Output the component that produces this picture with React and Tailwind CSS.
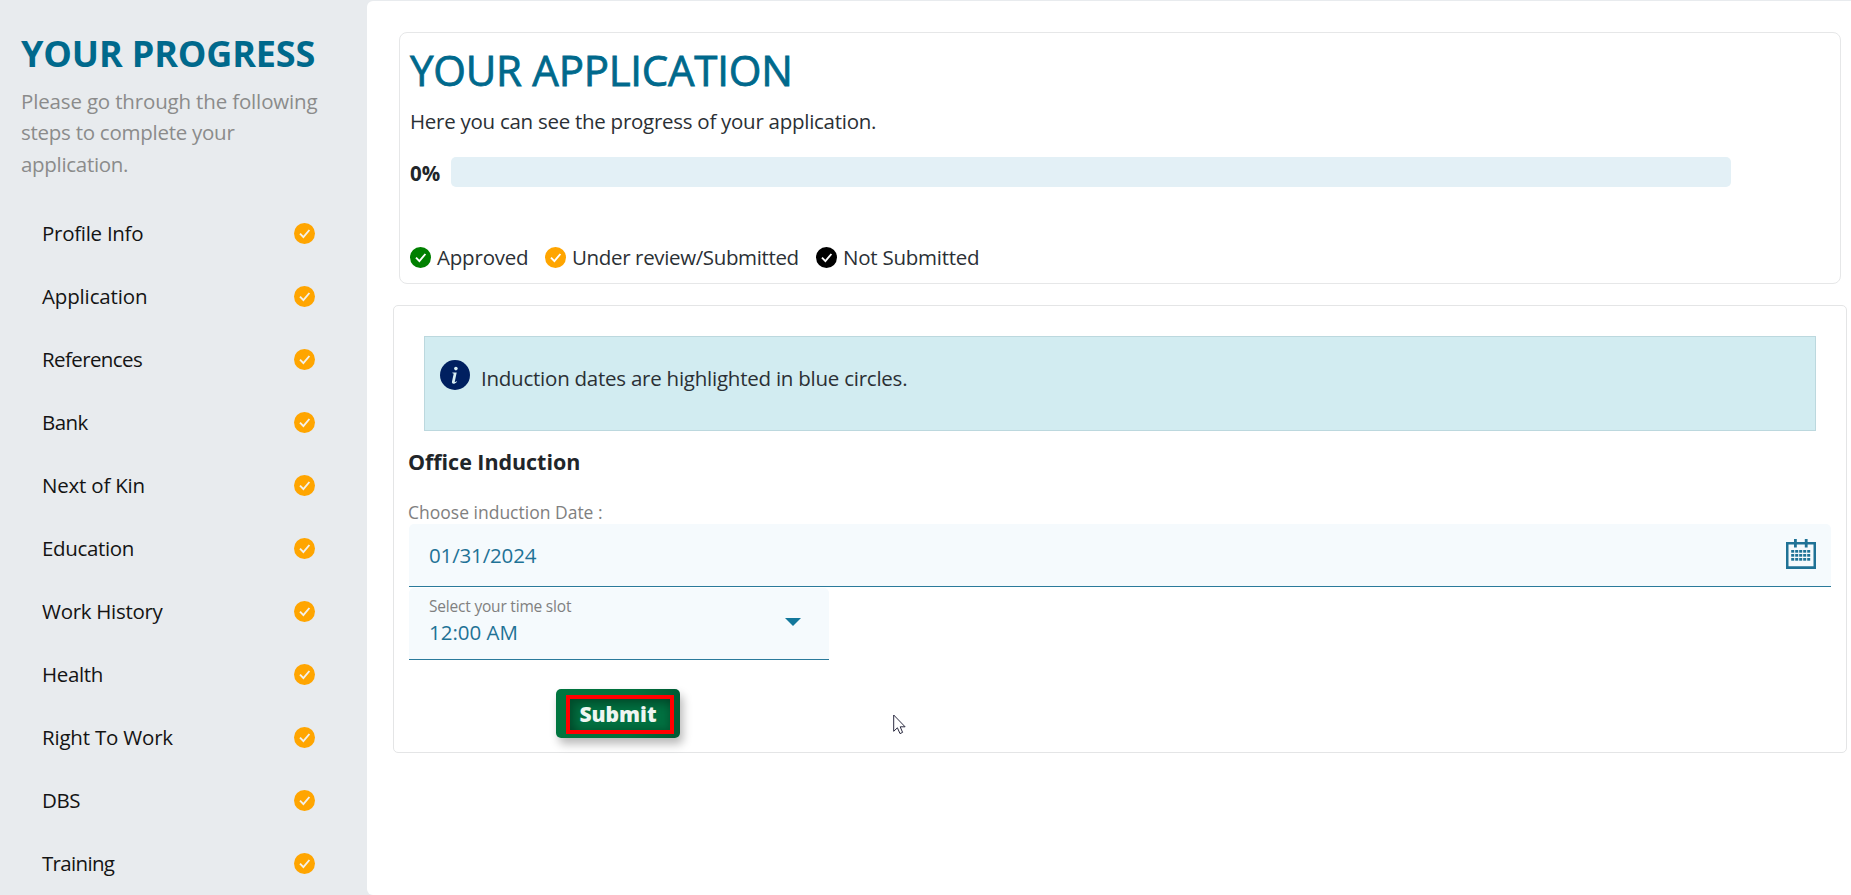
const STEPS = [
  { label: "Profile Info", tracking: "tracking-[-0.28px]" },
  { label: "Application", tracking: "tracking-[-0.15px]" },
  { label: "References", tracking: "tracking-[-0.6px]" },
  { label: "Bank", tracking: "tracking-[-0.6px]" },
  { label: "Next of Kin", tracking: "tracking-[-0.2px]" },
  { label: "Education", tracking: "tracking-[-0.35px]" },
  { label: "Work History", tracking: "tracking-[-0.3px]" },
  { label: "Health", tracking: "tracking-[-0.35px]" },
  { label: "Right To Work", tracking: "tracking-[-0.2px]" },
  { label: "DBS", tracking: "tracking-[-0.4px]" },
  { label: "Training", tracking: "tracking-[-0.68px]" },
];

function CheckCircle({ className, check = "#ffffff" }) {
  return (
    <svg viewBox="0 0 21 21" className={`block size-[21px] shrink-0 ${className}`}>
      <circle cx="10.5" cy="10.5" r="10.5" fill="currentColor" />
      <path d="M6 10.7 9.4 14.2 15.4 7" fill="none" stroke={check} strokeWidth="1.9" />
    </svg>
  );
}

function InfoIcon() {
  return (
    <svg viewBox="0 0 30 30" className="mt-[23px] block size-[30px] shrink-0">
      <circle cx="15" cy="15" r="15" fill="#002060" />
      <circle cx="15.9" cy="8.6" r="1.8" fill="#d8eef3" />
      <path
        d="M12.4 12.6H16.7L14.8 21.4C14.7 22.2 15.3 22.3 16.8 21.2L17 21.8C15.6 23.3 14.6 23.8 13.5 23.8C12.2 23.8 11.7 22.9 12 21.6L13.6 14.2C13.7 13.6 13.4 13.4 12.3 13.3Z"
        fill="#d8eef3"
      />
    </svg>
  );
}

const DOT_COLUMNS = [5.2, 9.2, 13.2, 17.2, 21.2];
const DOT_ROWS = [11, 15, 19];

function CalendarIcon() {
  return (
    <svg viewBox="0 0 30 30" className="block size-[30px] shrink-0 text-[#1f7296]" fill="currentColor">
      <path fillRule="evenodd" d="M0 3H30V30H0ZM2.5 5.5V27.3H27.5V5.5Z" />
      <rect x="8" y="0" width="2.8" height="8.5" />
      <rect x="18.8" y="0" width="2.8" height="8.5" />
      {DOT_ROWS.map((y) =>
        DOT_COLUMNS.map((x) => <rect key={`${x}-${y}`} x={x} y={y} width="3" height="2.7" />)
      )}
    </svg>
  );
}

function Pointer() {
  return (
    <svg viewBox="0 0 13 21" className="absolute top-[714px] left-[893px] h-[21px] w-[13px]">
      <path
        d="M.7 1V17.3L4.4 13.8L7 19.6L9.6 18.4L7.2 12.8H12.1Z"
        fill="#fff"
        stroke="#2b2b40"
        strokeWidth="1"
      />
    </svg>
  );
}

function Sidebar() {
  return (
    <aside className="w-[367px] shrink-0 pt-[36px] pl-[21px]">
      <h2 className="text-[36px] leading-[36px] font-bold tracking-[-0.15px] text-[#00698c]">YOUR PROGRESS</h2>
      <p className="mt-[13.5px] text-[20.5px] leading-[31.5px] whitespace-nowrap text-[#8b8b8b]">
        <span className="block tracking-[-0.16px]">Please go through the following</span>
        <span className="block tracking-[-0.26px]">steps to complete your</span>
        <span className="block tracking-[-0.3px]">application.</span>
      </p>
      <ul className="mt-[22px] w-[294px] pl-[21px] text-[20.5px] text-[#141414]">
        {STEPS.map((s) => (
          <li key={s.label} className="flex h-[63px] items-center justify-between">
            <span className={s.tracking}>{s.label}</span>
            <CheckCircle className="text-[#ffa500]" check="#f3f1ec" />
          </li>
        ))}
      </ul>
    </aside>
  );
}

function ApplicationCard() {
  return (
    <section className="mr-[10px] ml-[6px] h-[252px] rounded-lg border border-[#e6e7e8] bg-white pt-3 pl-[10px]">
      <h1 className="text-[42px] leading-[50px] font-medium tracking-[-0.25px] text-[#00698c] [-webkit-text-stroke:0.8px_#00698c]">
        YOUR APPLICATION
      </h1>
      <p className="mt-[11px] text-[20.5px] leading-[30px] tracking-[-0.27px]">
        Here you can see the progress of your application.
      </p>
      <div className="mt-[21px] flex h-[30px] items-center">
        <span className="w-[41px] pt-[2px] text-[20.5px] leading-[30px] font-bold text-[#212529]">0%</span>
        <div className="h-[30px] w-[1280px] rounded-[5px] bg-[#e3f0f6]" />
      </div>
      <div className="mt-[60px] flex h-[21px] items-center text-[20.5px] leading-[21px]">
        <CheckCircle className="text-[#008000]" />
        <span className="ml-[6px] w-[108px] tracking-[-0.2px]">Approved</span>
        <CheckCircle className="text-[#ffa500]" />
        <span className="ml-[6px] w-[244px] tracking-[-0.36px]">Under review/Submitted</span>
        <CheckCircle className="text-black" />
        <span className="ml-[6px] tracking-[-0.25px]">Not Submitted</span>
      </div>
    </section>
  );
}

function InductionCard() {
  return (
    <section className="mt-[21px] mr-[4px] h-[448px] rounded-[5px] border border-[#e4e5e6] bg-white pt-[30px] pr-[15px] pl-[15px]">
      <div className="mr-[15px] ml-[15px] flex h-[95px] border border-[#bcd8de] bg-[#d2ecf1] pl-[14.5px]">
        <InfoIcon />
        <p className="mt-[26px] ml-[11.5px] text-[20.5px] leading-[30px] tracking-[-0.24px]">
          Induction dates are highlighted in blue circles.
        </p>
      </div>
      <h3 className="mt-4 -ml-px text-[21.5px] leading-[30px] font-bold tracking-[-0.05px] text-[#212529]">
        Office Induction
      </h3>
      <label className="mt-[23px] -ml-px block text-[17.5px] leading-6 text-[#808080]">Choose induction Date :</label>
      <div className="flex h-[63px] justify-between rounded-t-[5px] border-b border-[#2a7a9b] bg-[#f5fafd] pr-[15px] pl-5">
        <span className="mt-[15.5px] text-[20.5px] leading-[30px] tracking-[-0.15px] text-[#1f7296]">01/31/2024</span>
        <div className="mt-[15px]">
          <CalendarIcon />
        </div>
      </div>
      <div className="mt-px flex h-[72px] w-[420px] justify-between rounded-t-[5px] border-b border-[#2a7a9b] bg-[#f5fafd] pr-[28px] pl-5">
        <div className="pt-[7px]">
          <div className="text-[15.5px] leading-[22px] tracking-[-0.2px] text-[#808080]">Select your time slot</div>
          <div className="mt-px text-[20.5px] leading-7 text-[#1f7296]">12:00 AM</div>
        </div>
        <svg viewBox="0 0 16 8" className="mt-[30px] block h-2 w-4">
          <path d="M0 0H16L8 8Z" fill="#12779b" />
        </svg>
      </div>
      <button className="mt-[29px] ml-[147px] flex h-[49px] w-[124px] rounded-[5px] bg-[linear-gradient(100deg,#00753f_0%,#00713d_60%,#005a34_95%)] pt-[6px] pl-[10px] shadow-[3px_6px_10px_rgba(0,0,0,0.28)]">
        <span className="flex h-[39px] w-[108px] items-center justify-center border-4 border-[#ff0000] bg-[#007040] pr-[4px] pb-[2px] text-[21px] leading-[30px] font-extrabold text-[#eef6f1] shadow-[inset_5px_5px_10px_rgba(0,0,0,0.3),inset_-3px_-2px_6px_rgba(0,0,0,0.12)]">
          Submit
        </span>
      </button>
    </section>
  );
}

export default function App() {
  return (
    <div className="relative flex h-[895px] w-[1851px] overflow-hidden bg-[#e8ebee] pt-px font-['Open_Sans','Noto_Sans',sans-serif] text-[#2b3035]">
      <div className="-mt-px flex">
        <Sidebar />
      </div>
      <main className="h-[894px] min-w-0 flex-1 rounded-l-md bg-white pt-[31px] pl-[26px]">
        <ApplicationCard />
        <InductionCard />
      </main>
      <Pointer />
    </div>
  );
}
